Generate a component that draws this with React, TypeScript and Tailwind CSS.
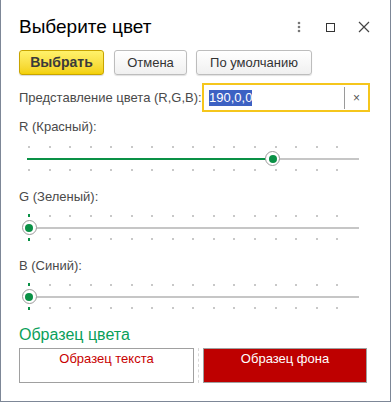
import React from "react";

const font = { fontFamily: '"Liberation Sans", Arial, sans-serif' };

const Slider = ({ value }: { value: number }) => {
	const px = 1.284;
	const pos = 10 + value * px;
	const ticks = Array.from({ length: 16 }, (_, i) => i);
	return (
		<div className="relative h-[30px] w-[345px]">
			{/* track */}
			<div className="absolute left-[8px] right-[5px] top-[14px] h-[2px] bg-[#c6c6c6]" />
			<div className="absolute left-[8px] top-[14px] h-[2px] bg-[#0a9146]" style={{ width: pos - 8 }} />
			{ticks.map((i) => {
				const x = 10 + i * 16 * px;
				const on = i * 16 === value;
				return (
					<React.Fragment key={i}>
						<div
							className={on ? "absolute top-[1px] h-[3px] w-[2px] bg-[#0a9146]" : "absolute top-[2px] h-[2px] w-[2px] bg-[#c8c8c8]"}
							style={{ left: x - 1 }}
						/>
						<div
							className={on ? "absolute top-[25px] h-[3px] w-[2px] bg-[#0a9146]" : "absolute top-[25px] h-[2px] w-[2px] bg-[#c8c8c8]"}
							style={{ left: x - 1 }}
						/>
					</React.Fragment>
				);
			})}
			<div
				className="absolute top-[7px] flex h-[15px] w-[15px] items-center justify-center rounded-full border border-[#9a9a9a] bg-white"
				style={{ left: pos - 7.5 }}
			>
				<div className="h-[8px] w-[8px] rounded-full bg-[#0a9146]" />
			</div>
		</div>
	);
};

export default function App() {
	return (
		<div
			className="flex h-[402px] w-[391px] flex-col border-x border-b border-[#7d8797] bg-white pl-[18px] text-[13px] text-[#4a4a4a]"
			style={font}
		>
			{/* Title */}
			<div className="flex items-center pt-[15px]">
				<span className="text-[19px] leading-[24px] text-black">Выберите цвет</span>
				<div className="ml-auto flex items-center">
					<svg width="4" height="12" viewBox="0 0 4 12" className="mr-[25px]">
						<circle cx="2" cy="2" r="1.3" fill="#777" />
						<circle cx="2" cy="6" r="1.3" fill="#777" />
						<circle cx="2" cy="10" r="1.3" fill="#777" />
					</svg>
					<div className="mr-[23px] h-[9px] w-[9px] border-[1.5px] border-[#333]" />
					<svg width="12" height="12" viewBox="0 0 12 12" className="mr-[20px]">
						<path d="M1 1L11 11M11 1L1 11" stroke="#444" strokeWidth="1.2" />
					</svg>
				</div>
			</div>

			{/* Buttons */}
			<div className="mt-[11px] flex gap-[10px]">
				<button className="h-[25px] w-[85px] rounded-[3px] border border-[#c8a400] bg-gradient-to-b from-[#fff26a] to-[#f3d000] text-[14px] font-bold text-[#3a3a3a] shadow-[0_1px_1px_rgba(0,0,0,0.15)]">
					Выбрать
				</button>
				<button className="h-[25px] w-[73px] rounded-[3px] border border-[#bdbdbd] bg-gradient-to-b from-white to-[#f0f0f0] text-[13px] text-[#333] shadow-[0_1px_1px_rgba(0,0,0,0.12)]">
					Отмена
				</button>
				<button className="ml-[-1px] h-[25px] w-[116px] rounded-[3px] border border-[#bdbdbd] bg-gradient-to-b from-white to-[#f0f0f0] text-[13px] text-[#333] shadow-[0_1px_1px_rgba(0,0,0,0.12)]">
					По умолчанию
				</button>
			</div>

			{/* RGB input */}
			<div className="mt-[8px] flex items-center">
				<span className="w-[183px]">Представление цвета (R,G,B):</span>
				<div className="flex h-[29px] w-[168px] items-center border-2 border-[#f5c61c] pl-[5px]">
					<span className="bg-[#3c61c3] leading-[16px] text-white">190,0,0</span>
					<div className="ml-auto h-[22px] w-px bg-[#9a9a9a]" />
					<span className="w-[23px] text-center text-[12px] text-[#555]">×</span>
				</div>
			</div>

			<div className="mt-[7px] leading-[16px]">R (Красный):</div>
			<div className="mt-[9px]">
				<Slider value={190} />
			</div>

			<div className="mt-[15px] leading-[16px]">G (Зеленый):</div>
			<div className="mt-[8px]">
				<Slider value={0} />
			</div>

			<div className="mt-[15px] leading-[16px]">B (Синий):</div>
			<div className="mt-[8px]">
				<Slider value={0} />
			</div>

			<div className="mt-[13px] text-[16px] leading-[20px] text-[#0aa05a]">Образец цвета</div>
			<div className="mt-[3px] flex">
				<div className="h-[35px] w-[175px] border border-[#a0a0a0] pt-[2px] text-center leading-[16px] text-[#c80000]">
					Образец текста
				</div>
				<div className="mx-[4px] w-0 border-l border-dashed border-[#d8d8d8]" />
				<div className="h-[35px] w-[164px] border border-[#a0a0a0] bg-[#be0000] pt-[2px] text-center leading-[16px] text-white">
					Образец фона
				</div>
			</div>
		</div>
	);
}
